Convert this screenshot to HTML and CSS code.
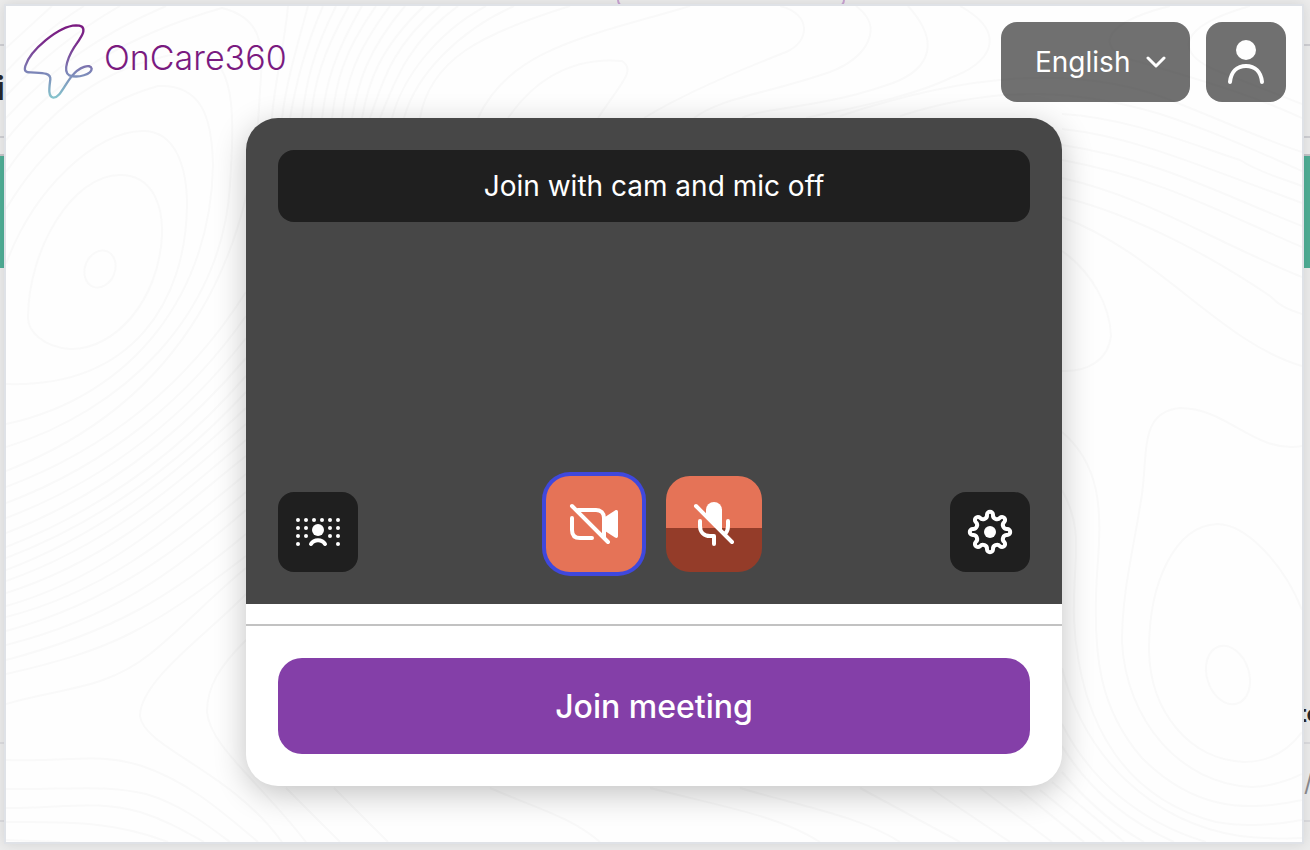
FILE: index.html
```html
<!DOCTYPE html>
<html lang="en">
<head>
  <meta charset="UTF-8" />
  <meta name="viewport" content="width=device-width, initial-scale=1.0"/>
  <title>OnCare360</title>
  <link rel="stylesheet" href="styles.css">
</head>
<body>
  <!-- page behind the dialog -->
  <div class="page" aria-hidden="true">
    <div class="page-top"><span class="page-pill"></span></div>
    <div class="page-title">i</div>
    <div class="page-gap"></div>
    <div class="page-banner"></div>
    <div class="page-body"></div>
    <div class="page-row page-name">te</div>
    <div class="page-row page-note">/</div>
  </div>

  <div class="modal" role="dialog" aria-label="OnCare360">
    <svg class="contours" viewBox="6 6 1296 836" preserveAspectRatio="xMidYMid slice" aria-hidden="true">
      <!-- left hill -->
      <ellipse cx="100" cy="269" rx="15" ry="19" transform="rotate(22 100 269)"/>
      <path d="M28 318C28 250 72 175 120 175C154 175 163 208 162 235C159 300 115 350 70 349C42 347 28 330 28 318Z"/>
      <path d="M6 264C34 188 96 131 143 131C176 131 187 168 187 205C186 300 134 388 6 384"/>
      <path d="M6 209C40 152 90 105 158 86C202 84 212 118 213 165C211 290 136 396 6 424"/>
      <path d="M6 172C60 94 118 62 192 51C238 54 234 118 230 185C222 318 120 412 6 447"/>
      <path d="M6 140C56 78 130 34 222 8C262 18 264 44 260 90C254 250 188 400 6 471"/>
      <path d="M6 118C50 70 100 34 166 6M6 96C40 60 78 30 120 6M6 72C30 46 52 26 84 6M6 48L52 6"/>
      <path d="M6 487C110 448 190 380 246 292M6 503C110 464 190 396 246 316M6 518C112 478 190 410 246 338"/>
      <path d="M6 533C112 492 190 424 246 358M6 547C112 506 190 440 246 376M6 558C112 518 190 452 246 392"/>
      <path d="M6 570C112 530 186 464 246 408M6 581C112 544 186 476 246 424M6 593C112 560 186 490 246 440"/>
      <path d="M6 606C112 576 180 508 246 456M6 617C112 590 180 528 246 474M6 631C112 602 180 548 246 492"/>
      <path d="M6 645C112 618 172 574 246 510M6 660C112 632 170 598 246 534M6 674C112 650 150 630 246 556"/>
      <path d="M6 704C60 688 105 690 150 654C180 630 214 594 246 568"/>
      <path d="M246 594C210 632 140 680 140 716C144 748 230 770 282 842"/>
      <path d="M246 640C220 666 207 686 207 712C210 746 258 780 306 842"/>
      <!-- bottom left -->
      <path d="M6 760C70 762 98 752 142 766C184 780 216 806 258 842M6 789C66 790 104 784 146 794C180 804 206 824 230 842"/>
      <path d="M6 808C66 808 96 800 140 812C166 820 186 832 204 842M6 822C60 822 110 820 168 842M6 840L60 842"/>
      <!-- top middle -->
      <path d="M288 6C284 50 274 84 272 118M308 6C296 50 286 84 282 118M323 6C304 50 296 84 290 118M336 6C312 54 306 84 302 118"/>
      <path d="M349 6C322 54 314 84 311 118M362 6C334 54 326 84 322 118M376 6C342 54 336 84 332 118M390 6C354 54 346 84 342 118"/>
      <path d="M405 6C366 52 358 84 352 118M424 6C378 50 368 84 362 118M440 6C390 48 382 84 370 118M458 6C406 44 394 84 380 118"/>
      <path d="M486 6C434 34 402 80 392 118M514 6C460 30 416 74 404 118M570 6C480 34 430 60 420 118"/>
      <path d="M690 6C590 36 510 48 478 118M508 118C530 86 566 56 622 61C636 70 622 82 598 118"/>
      <path d="M780 6C812 14 810 42 786 52C730 74 680 96 644 118M856 6C886 28 866 58 830 72C766 94 720 98 694 118"/>
      <path d="M908 6C946 48 924 74 884 86C820 108 760 108 742 118M960 6C1010 34 990 64 950 78C910 98 840 110 806 118"/>
      <!-- right slope -->
      <path d="M1170 6C1090 26 1100 54 1140 62C1200 80 1250 94 1302 118M1250 6C1180 26 1170 52 1220 72L1302 104"/>
      <path d="M840 116C960 76 1080 60 1180 104C1230 124 1270 142 1302 152M900 116C1000 84 1080 90 1160 114C1210 130 1250 148 1302 171"/>
      <path d="M1062 114C1130 118 1190 144 1240 160C1262 174 1282 178 1302 186M1062 129C1130 136 1190 162 1302 203"/>
      <path d="M1062 145C1160 160 1220 194 1302 226M1062 160C1160 178 1220 212 1302 247M1062 178C1150 198 1210 240 1302 277"/>
      <path d="M1062 197C1140 216 1220 262 1270 296C1282 308 1290 310 1302 314M1062 217C1160 254 1220 342 1302 366"/>
      <path d="M1062 251C1092 272 1110 306 1111 336C1108 360 1088 372 1062 371"/>
      <!-- right hill -->
      <ellipse cx="1228" cy="675" rx="21" ry="30" transform="rotate(-18 1228 675)"/>
      <path d="M1302 610C1284 564 1246 524 1217 524C1176 526 1149 580 1149 650C1150 712 1190 760 1244 762C1272 762 1290 748 1302 732"/>
      <path d="M1302 446C1254 454 1228 408 1180 408C1140 412 1148 450 1142 494C1134 548 1122 590 1122 642C1126 720 1180 784 1252 787C1274 786 1290 780 1302 774"/>
      <path d="M1062 432C1100 464 1102 510 1098 560C1090 660 1102 712 1142 758C1190 806 1240 814 1302 800"/>
      <path d="M1062 490C1086 534 1072 560 1074 620C1080 730 1130 800 1216 822C1250 828 1280 824 1302 820"/>
      <path d="M1062 668C1084 756 1150 822 1240 836C1270 840 1290 838 1302 838M1062 724C1090 780 1140 822 1206 842"/>
      <path d="M1062 746C1090 792 1130 822 1174 842M1062 772C1086 800 1112 824 1144 842M1052 782L1124 842M1040 790L1104 842M1020 790L1084 842"/>
      <path d="M286 788L340 842M334 788L388 842M490 788C530 806 570 816 600 842M650 788C720 806 780 816 820 842M740 788C800 806 860 816 900 842M860 788L960 842M930 788L1010 842M980 788L1052 842"/>
    </svg>

    <header class="header">
      <a class="brand" href="#">
        <svg class="brand-mark" viewBox="66 66 216 240" aria-hidden="true">
          <defs>
            <linearGradient id="brand-fade" gradientUnits="userSpaceOnUse" x1="0" y1="74" x2="0" y2="296">
              <stop offset="0" stop-color="#7a1a80"/>
              <stop offset="0.25" stop-color="#7a2c8c"/>
              <stop offset="0.65" stop-color="#7c86b8"/>
              <stop offset="1" stop-color="#86c6cd"/>
            </linearGradient>
          </defs>
          <path d="M250 94C252 80 242 76 228 76C175 78 90 152 76 198C72 212 76 217 92 217C125 219 153 217 151 238C148 262 143 290 160 293C178 294 190 262 214 230C238 200 272 190 275 206C275 222 235 236 208 226C186 215 205 165 232 128C242 112 249 104 250 94Z" fill="none" stroke="url(#brand-fade)" stroke-width="7"/>
        </svg>
        <span class="brand-name">OnCare360</span>
      </a>
      <div class="header-actions">
        <div class="language">
          <select class="language-select" aria-label="Language">
            <option>English</option>
          </select>
          <svg class="language-arrow" viewBox="0 0 20 12" aria-hidden="true"><path d="M2 2L10 10L18 2"/></svg>
        </div>
        <button class="icon-button profile" type="button" aria-label="Profile">
          <svg viewBox="0 0 80 80" aria-hidden="true">
            <circle class="solid" cx="40" cy="28" r="10"/>
            <path d="M24 60C25 50 31 44 40 44S55 50 56 60"/>
          </svg>
        </button>
      </div>
    </header>

    <main class="card">
      <section class="preview">
        <button class="quick-join" type="button">Join with cam and mic off</button>
        <div class="controls">
          <button class="icon-button dark" type="button" aria-label="Background effects">
            <svg viewBox="0 0 80 80" aria-hidden="true">
              <g class="solid">
                <circle cx="20" cy="28" r="2"/><circle cx="28" cy="28" r="2"/><circle cx="36" cy="28" r="2"/><circle cx="44" cy="28" r="2"/><circle cx="52" cy="28" r="2"/><circle cx="60" cy="28" r="2"/>
                <circle cx="20" cy="36" r="2"/><circle cx="28" cy="36" r="2"/><circle cx="52" cy="36" r="2"/><circle cx="60" cy="36" r="2"/>
                <circle cx="20" cy="44" r="2"/><circle cx="28" cy="44" r="2"/><circle cx="52" cy="44" r="2"/><circle cx="60" cy="44" r="2"/>
                <circle cx="20" cy="52" r="2"/><circle cx="60" cy="52" r="2"/>
                <circle cx="40" cy="38" r="6"/>
              </g>
              <path d="M33 52C36 47 44 47 47 52"/>
            </svg>
          </button>
          <div class="devices">
            <button class="device camera" type="button" aria-label="Turn camera on">
              <svg viewBox="0 0 96 96" aria-hidden="true">
                <path d="M32 34H50C55 34 58 37 58 42V61M26 42V54C26 60 29 62 34 62H46M26 30L62 66"/>
                <path class="solid" d="M59 41L69 34.500C71 33.500 72 34.500 72 36V60C72 61.500 71 62.500 69 61.500L59 55Z"/>
              </svg>
            </button>
            <button class="device mic" type="button" aria-label="Turn microphone on">
              <svg viewBox="0 0 96 96" aria-hidden="true">
                <path class="solid" d="M40 34A8 8 0 0 1 56 34V56L40 40Z"/>
                <path d="M34 45V50C34 56 38 60 44 60H48V68M62 45V50C62 54 61 56 59 58M30 30L66 66"/>
              </svg>
            </button>
          </div>
          <button class="icon-button dark" type="button" aria-label="Settings">
            <svg viewBox="-40 -40 80 80" aria-hidden="true">
              <circle class="solid" r="6"/>
              <path d="M-3 -17.200A3 3 0 0 1 3 -17.200A4 4 0 0 0 10.040 -14.280A3 3 0 0 1 14.280 -10.040A4 4 0 0 0 17.200 -3A3 3 0 0 1 17.200 3A4 4 0 0 0 14.280 10.040A3 3 0 0 1 10.040 14.280A4 4 0 0 0 3 17.200A3 3 0 0 1 -3 17.200A4 4 0 0 0 -10.040 14.280A3 3 0 0 1 -14.280 10.040A4 4 0 0 0 -17.200 3A3 3 0 0 1 -17.200 -3A4 4 0 0 0 -14.280 -10.040A3 3 0 0 1 -10.040 -14.280A4 4 0 0 0 -3 -17.200Z"/>
            </svg>
          </button>
        </div>
      </section>
      <footer class="join">
        <button class="join-button" type="button">Join meeting</button>
      </footer>
    </main>
  </div>
</body>
</html>
```

FILE: styles.css
```css
:root {
  --dark: #1f1f1f;
  --panel: #474747;
  --coral: #e57357;
  --coral-deep: #943c29;
  --purple: #843fa8;
  --brand: #7a1a80;
  --focus: #3f48dd;
}
* {
  box-sizing: border-box;
}
body {
  margin: 0;
  min-height: 100vh;
  display: flex;
  position: relative;
  overflow: hidden;
  background: #ececec;
  font-family: Inter, "Liberation Sans", sans-serif;
}
button, select {
  font-family: inherit;
  border: none;
  margin: 0;
  padding: 0;
  color: white;
  cursor: pointer;
}

/* page behind the dialog */
.page {
  position: absolute;
  inset: 0;
  display: flex;
  flex-direction: column;
  color: #28282c;
  font-weight: 700;
}
.page-top {
  height: 46px;
  border-bottom: 2px solid #cfcfd3;
  display: flex;
  justify-content: center;
}
.page-pill {
  width: 228px;
  height: 8px;
  margin-left: 152px;
  border: 2px solid #c9a3d2;
  border-top: none;
  border-radius: 0 0 20px 20px;
}
.page-title {
  height: 92px;
  border-bottom: 2px solid #cfcfd3;
  font-size: 32px;
  line-height: 86px;
  text-indent: -4px;
}
.page-gap {
  height: 18px;
  border-bottom: 2px solid #c4c4c8;
}
.page-banner {
  height: 112px;
  background: #4fae96;
}
.page-body {
  flex: 1;
}
.page-row {
  padding-left: calc(100% - 12px);
  height: 78px;
  border-bottom: 2px solid #dcdcdf;
}
.page-name {
  height: 60px;
  font-size: 24px;
  line-height: 60px;
}
.page-note {
  padding-left: calc(100% - 6px);
  margin-bottom: 28px;
  font-size: 24px;
  font-weight: 400;
  line-height: 78px;
  color: #8a8a8e;
}

/* dialog */
.modal {
  position: relative;
  flex: 1;
  margin: 4px 6px 6px 4px;
  border: 2px solid #dfe2e7;
  background: #fefefe;
  box-shadow: 0 0 12px rgba(0,0,0,0.1);
}
.contours {
  position: absolute;
  inset: 0;
  width: 100%;
  height: 100%;
  fill: none;
  stroke: #f9f9f9;
  stroke-width: 2;
}
.header {
  position: relative;
  display: flex;
  justify-content: space-between;
  padding: 16px;
}
.brand {
  display: flex;
  gap: 10px;
  color: var(--brand);
  text-decoration: none;
}
.brand-mark {
  width: 72px;
  height: 80px;
}
.brand-name {
  font-weight: 300;
  font-size: 34px;
  line-height: 72px;
}
.header-actions {
  display: flex;
  gap: 16px;
}
.language {
  position: relative;
}
.language-select {
  appearance: none;
  height: 80px;
  padding: 0 59px 0 34px;
  border-radius: 16px;
  background: rgba(31,31,31,0.64);
  font-size: 28px;
}
.language-arrow {
  position: absolute;
  top: 34px;
  right: 24px;
  width: 20px;
  height: 12px;
  pointer-events: none;
}
svg {
  fill: none;
}
.language-arrow, .icon-button svg, .device svg {
  stroke: white;
  stroke-width: 4;
  stroke-linecap: round;
  stroke-linejoin: round;
}
.language-arrow {
  stroke-width: 3;
}
.icon-button svg, .device svg {
  display: block;
  width: 100%;
  height: 100%;
}
.icon-button .solid, .device .solid {
  fill: white;
  stroke: none;
}
.icon-button {
  width: 80px;
  height: 80px;
  border-radius: 16px;
}
.profile {
  background: rgba(31,31,31,0.64);
}
.dark {
  background: var(--dark);
}

/* join card */
.card {
  position: relative;
  max-width: 816px;
  margin: 0 auto 56px;
  border-radius: 32px;
  background: white;
  box-shadow: 0 8px 32px rgba(0,0,0,0.24);
}
.preview {
  display: flex;
  flex-direction: column;
  justify-content: space-between;
  min-height: 486px;
  padding: 32px;
  border-radius: 32px 32px 0 0;
  background: var(--panel);
}
.quick-join {
  height: 72px;
  border-radius: 16px;
  background: var(--dark);
  font-size: 28px;
}
.controls {
  display: flex;
  justify-content: space-between;
  align-items: flex-end;
}
.devices {
  display: flex;
  gap: 24px;
}
.device {
  width: 96px;
  height: 96px;
  border-radius: 24px;
  background: var(--coral);
}
.camera {
  box-shadow: 0 0 0 4px var(--focus);
}
.mic {
  background: linear-gradient(var(--coral) 52px, var(--coral-deep) 52px);
}
.join {
  margin-top: 20px;
  padding: 32px;
  border-top: 2px solid #c2c2c2;
}
.join-button {
  width: 100%;
  height: 96px;
  border-radius: 24px;
  background: var(--purple);
  font-size: 32px;
  font-weight: 500;
}
```
